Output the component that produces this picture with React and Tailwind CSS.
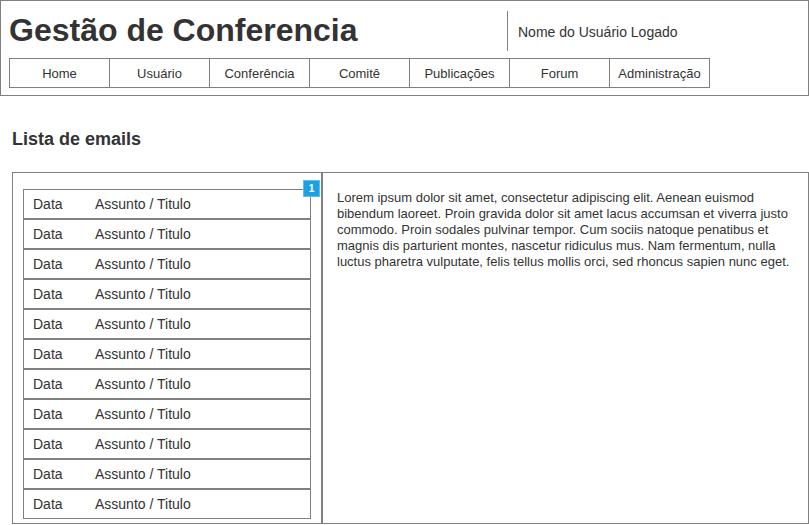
const navItems = ["Home", "Usuário", "Conferência", "Comitê", "Publicações", "Forum", "Administração"];

const lorem =
  "Lorem ipsum dolor sit amet, consectetur adipiscing elit. Aenean euismod bibendum laoreet. Proin gravida dolor sit amet lacus accumsan et viverra justo commodo. Proin sodales pulvinar tempor. Cum sociis natoque penatibus et magnis dis parturient montes, nascetur ridiculus mus. Nam fermentum, nulla luctus pharetra vulputate, felis tellus mollis orci, sed rhoncus sapien nunc eget.";

function Header() {
  return (
    <div className="w-[809px] h-[96px] border border-[#808080]">
      <div className="flex h-[57px] items-start">
        <h1 className="w-[506px] h-[57px] flex items-center pl-[8px] text-[32px] font-bold text-[#333333] leading-none">
          Gestão de Conferencia
        </h1>
        <div className="mt-[10px] h-[40px] border-l border-[#808080] pl-[10px] pt-[2px] flex items-center text-[14px] text-[#333333]">
          Nome do Usuário Logado
        </div>
      </div>
      <nav className="flex ml-[8px]">
        {navItems.map((item, i) => (
          <div
            key={item}
            className={
              "w-[101px] h-[30px] border border-[#808080] flex items-center justify-center pt-px text-[13px] text-[#333333] " +
              (i > 0 ? "-ml-px" : "")
            }
          >
            {item}
          </div>
        ))}
      </nav>
    </div>
  );
}

function EmailList() {
  const rows = Array.from({ length: 11 });
  return (
    <div className="relative w-[310px] border border-[#808080] pt-[16px] pl-[10px] pb-[4px]">
      <div className="relative w-[288px]">
        {rows.map((_, i) => (
          <div
            key={i}
            className="h-[30px] border border-[#808080] flex items-center pl-[9px] text-[14px] text-[#333333]"
          >
            <span className="w-[62px]">Data</span>
            <span>Assunto / Titulo</span>
          </div>
        ))}
        <span className="absolute -top-[9px] -right-[9px] w-[17px] h-[17px] bg-[#1ba1e2] border border-[#5cc0ee] text-white text-[10px] font-bold flex items-center justify-center leading-none">
          1
        </span>
      </div>
    </div>
  );
}

export default function App() {
  return (
    <div className="w-[809px] h-[525px] bg-white overflow-hidden" style={{ fontFamily: '"Liberation Sans", Arial, sans-serif' }}>
      <Header />
      <h2 className="ml-[12px] mt-[32px] text-[18px] font-bold text-[#333333] leading-[22px]">
        Lista de emails
      </h2>
      <div className="flex ml-[12px] mt-[22px]">
        <EmailList />
        <div className="w-[487px] border border-[#808080] pt-[17px] pl-[14px] pr-[10px]">
          <p className="text-[13px] leading-[16px] text-[#333333]">{lorem}</p>
        </div>
      </div>
    </div>
  );
}
